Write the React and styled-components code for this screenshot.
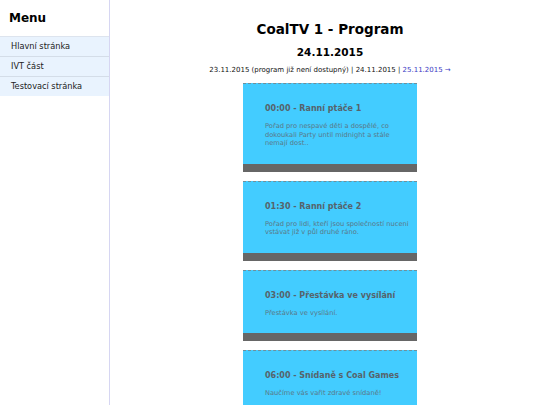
import React from 'react'
import styled, { createGlobalStyle } from 'styled-components'

const GlobalStyle = createGlobalStyle`
    html, body {
        margin: 0;
        padding: 0;
        background: #fff;
        font-family: "DejaVu Sans", Verdana, sans-serif;
    }
`

const Page = styled.div`
    display: flex;
    min-height: 405px;
`

const Sidebar = styled.nav`
    width: 109px;
    flex-shrink: 0;
    border-right: 1px solid #d6d6f2;
    background: #fff;
`

const MenuTitle = styled.h2`
    margin: 0;
    padding: 10px 9px 9px;
    font-size: 12px;
    line-height: 17px;
    font-weight: bold;
    color: #000;
`

const MenuList = styled.ul`
    list-style: none;
    margin: 0;
    padding: 0;
`

const MenuItem = styled.li`
    background: #e9f3fe;
    border-top: 1px solid #d4dde8;
    font-size: 8.2px;
    line-height: 19px;
    padding: 0 11px;
    color: #222;
    &:first-child {
        border-top-color: #dde4ee;
    }
`

const Main = styled.main`
    flex: 1;
    padding: 0 0 0 10px;
    display: flex;
    flex-direction: column;
    align-items: center;
`

const Title = styled.h1`
    margin: 20px 0 0;
    font-size: 13.5px;
    line-height: 18px;
    font-weight: bold;
    color: #000;
`

const DateTitle = styled.h3`
    margin: 8px 0 0;
    font-size: 10.5px;
    line-height: 13px;
    font-weight: bold;
    color: #000;
`

const DayNav = styled.div`
    margin-top: 6px;
    font-size: 7px;
    line-height: 10px;
    color: #111;
`

const DayLink = styled.a`
    color: #3b3bc4;
    text-decoration: none;
`

const Schedule = styled.div`
    margin-top: 8px;
    display: flex;
    flex-direction: column;
    gap: 9px;
`

const Show = styled.div`
    width: 174px;
    background: #43ccff;
    border-top: 1px dashed #6f8f9c;
    border-bottom: 8px solid #666;
`

const ShowBody = styled.div`
    padding: 20px 5px 16px 22px;
`

const ShowTitle = styled.h4`
    margin: 0 0 8px;
    font-size: 8px;
    line-height: 10px;
    font-weight: bold;
    color: #56636b;
`

const ShowText = styled.p`
    margin: 0;
    font-size: 6.7px;
    line-height: 8.5px;
    color: #5a7888;
`

const shows = [
    { time: '00:00', name: 'Ranní ptáče 1', text: 'Pořad pro nespavé děti a dospělé, co dokoukali Party until midnight a stále nemají dost..' },
    { time: '01:30', name: 'Ranní ptáče 2', text: 'Pořad pro lidi, kteří jsou společností nuceni vstávat již v půl druhé ráno.' },
    { time: '03:00', name: 'Přestávka ve vysílání', text: 'Přestávka ve vysílání.' },
    { time: '06:00', name: 'Snídaně s Coal Games', text: 'Naučíme vás vařit zdravé snídaně!' },
]

const App = () => {
    return (
        <Page>
            <GlobalStyle />
            <Sidebar>
                <MenuTitle>Menu</MenuTitle>
                <MenuList>
                    <MenuItem>Hlavní stránka</MenuItem>
                    <MenuItem>IVT část</MenuItem>
                    <MenuItem>Testovací stránka</MenuItem>
                </MenuList>
            </Sidebar>
            <Main>
                <Title>CoalTV 1 - Program</Title>
                <DateTitle>24.11.2015</DateTitle>
                <DayNav>
                    23.11.2015 (program již není dostupný) | 24.11.2015 | <DayLink href="#">25.11.2015 →</DayLink>
                </DayNav>
                <Schedule>
                    {shows.map((s) => (
                        <Show key={s.time}>
                            <ShowBody>
                                <ShowTitle>{s.time} - {s.name}</ShowTitle>
                                <ShowText>{s.text}</ShowText>
                            </ShowBody>
                        </Show>
                    ))}
                </Schedule>
            </Main>
        </Page>
    )
}

export default App
